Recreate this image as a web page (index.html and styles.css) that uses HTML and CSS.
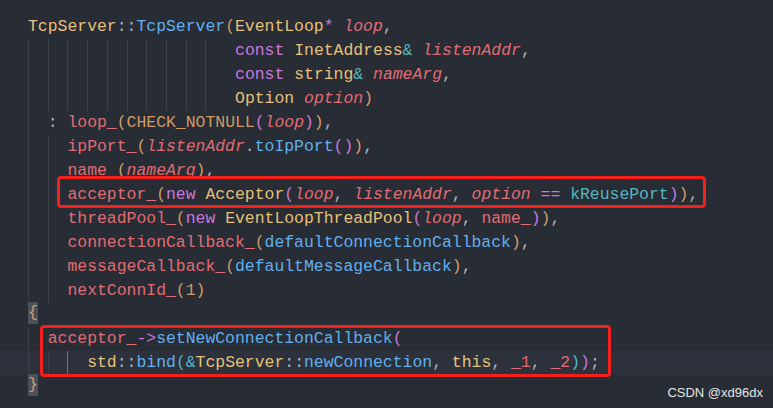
FILE: index.html
```html
<!DOCTYPE html>
<html>
<head>
<meta charset="utf-8">
<link rel="stylesheet" href="styles.css">
</head>
<body>
<div class="editor">
  <div class="code">
    <div class="ln"><span class="ty">TcpServer</span>::<span class="fn">TcpServer</span><span class="b1">(</span><span class="ty">EventLoop</span><span class="kw">*</span> <span class="pa">loop</span>,</div>
    <div class="ln"><span class="g">  </span><span class="g">  </span><span class="g">  </span><span class="g">  </span><span class="g">  </span><span class="g">  </span><span class="g">  </span><span class="g">  </span><span class="g">  </span><span class="g">  </span> <span class="kw">const</span> <span class="ty">InetAddress</span><span class="op">&amp;</span> <span class="pa">listenAddr</span>,</div>
    <div class="ln"><span class="g">  </span><span class="g">  </span><span class="g">  </span><span class="g">  </span><span class="g">  </span><span class="g">  </span><span class="g">  </span><span class="g">  </span><span class="g">  </span><span class="g">  </span> <span class="kw">const</span> <span class="ty">string</span><span class="op">&amp;</span> <span class="pa">nameArg</span>,</div>
    <div class="ln"><span class="g">  </span><span class="g">  </span><span class="g">  </span><span class="g">  </span><span class="g">  </span><span class="g">  </span><span class="g">  </span><span class="g">  </span><span class="g">  </span><span class="g">  </span> <span class="ty">Option</span> <span class="pa">option</span><span class="b1">)</span></div>
    <div class="ln"><span class="g">  </span>: <span class="va">loop_</span><span class="b1">(</span><span class="mc">CHECK_NOTNULL</span><span class="b2">(</span><span class="pa">loop</span><span class="b2">)</span><span class="b1">)</span>,</div>
    <div class="ln"><span class="g">  </span><span class="g">  </span><span class="va">ipPort_</span><span class="b1">(</span><span class="pa">listenAddr</span>.<span class="fn">toIpPort</span><span class="b2">()</span><span class="b1">)</span>,</div>
    <div class="ln"><span class="g">  </span><span class="g">  </span><span class="va">name_</span><span class="b1">(</span><span class="pa">nameArg</span><span class="b1">)</span>,</div>
    <div class="ln"><span class="g">  </span><span class="g">  </span><span class="va">acceptor_</span><span class="b1">(</span><span class="kw">new</span> <span class="ty">Acceptor</span><span class="b2">(</span><span class="pa">loop</span>, <span class="pa">listenAddr</span>, <span class="pa">option</span> <span class="kw">==</span> <span class="en">kReusePort</span><span class="b2">)</span><span class="b1">)</span>,</div>
    <div class="ln"><span class="g">  </span><span class="g">  </span><span class="va">threadPool_</span><span class="b1">(</span><span class="kw">new</span> <span class="ty">EventLoopThreadPool</span><span class="b2">(</span><span class="pa">loop</span>, <span class="va">name_</span><span class="b2">)</span><span class="b1">)</span>,</div>
    <div class="ln"><span class="g">  </span><span class="g">  </span><span class="va">connectionCallback_</span><span class="b1">(</span><span class="fn">defaultConnectionCallback</span><span class="b1">)</span>,</div>
    <div class="ln"><span class="g">  </span><span class="g">  </span><span class="va">messageCallback_</span><span class="b1">(</span><span class="fn">defaultMessageCallback</span><span class="b1">)</span>,</div>
    <div class="ln"><span class="g">  </span><span class="g">  </span><span class="va">nextConnId_</span><span class="b1">(</span><span class="nu">1</span><span class="b1">)</span></div>
    <div class="ln"><span class="b1 match">{</span></div>
    <div class="ln"><span class="g">  </span><span class="va">acceptor_</span><span class="kw">-&gt;</span><span class="fn">setNewConnectionCallback</span><span class="b2">(</span></div>
    <div class="ln current"><span class="g">  </span><span class="g">  </span><span class="g active">  </span><span class="ty">std</span>::<span class="fn">bind</span><span class="b3">(</span><span class="op">&amp;</span><span class="ty">TcpServer</span>::<span class="fn">newConnection</span>, <span class="ty">this</span>, <span class="va">_1</span>, <span class="va">_2</span><span class="b3">)</span><span class="b2">)</span>;</div>
    <div class="ln"><span class="b1 match">}</span></div>
  </div>
  <div class="mark mark-one"></div>
  <div class="mark mark-two"></div>
  <div class="watermark">CSDN @xd96dx</div>
</div>
</body>
</html>
```
FILE: styles.css
```css
html, body {
  margin: 0;
  padding: 0;
  background: #282c34;
}

.editor {
  position: relative;
  width: 773px;
  height: 408px;
  overflow: hidden;
  background: #282c34;
}

.code {
  padding-top: 15px;
  font-family: "Liberation Mono", "DejaVu Sans Mono", monospace;
  font-size: 16.43px;
  color: #abb2bf;
}

.ln {
  height: 24px;
  line-height: 24px;
  white-space: pre;
  padding-left: 28px;
}

.ln.current {
  background: #2c313b;
}

.g {
  display: inline-block;
  height: 24px;
  vertical-align: top;
  box-shadow: inset 1px 0 0 #3b4049;
}

.g.active {
  box-shadow: inset 1px 0 0 #6b717d;
}

.ty { color: #e5c07b; }
.fn { color: #61afef; }
.kw { color: #c678dd; }
.pa { color: #e06c75; font-style: italic; }
.va { color: #e06c75; }
.op { color: #56b6c2; }
.en { color: #56b6c2; }
.mc { color: #d19a66; }
.nu { color: #d19a66; }
.b1 { color: #d19a66; }
.b2 { color: #c678dd; }
.b3 { color: #56b6c2; }

.match {
  display: inline-block;
  height: 22px;
  line-height: 22px;
  vertical-align: top;
  margin-top: -1px;
  background: #4b515c;
}

.mark {
  position: absolute;
  border: 3px solid #f4201b;
  border-radius: 4px;
  box-sizing: border-box;
}

.mark-one {
  left: 57px;
  top: 176px;
  width: 649px;
  height: 32px;
}

.mark-two {
  left: 40px;
  top: 325px;
  width: 571px;
  height: 52px;
}

.watermark {
  position: absolute;
  right: 10px;
  bottom: 7px;
  font-family: "Liberation Sans", "DejaVu Sans", sans-serif;
  font-size: 13px;
  color: #e4e4e4;
  line-height: 16px;
}
```
